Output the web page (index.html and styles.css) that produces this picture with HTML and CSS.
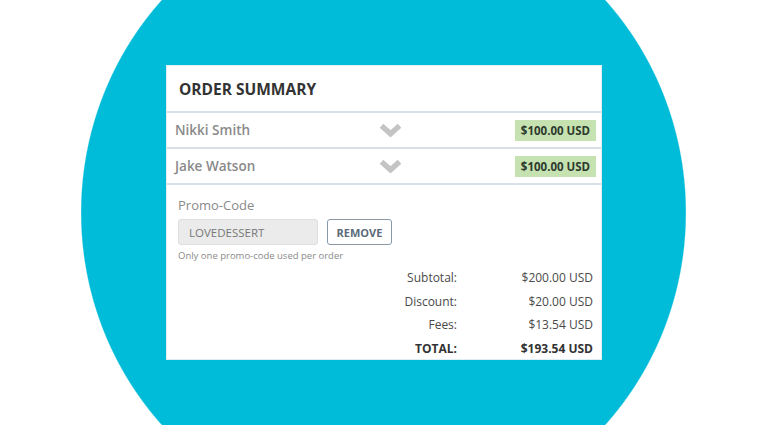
FILE: index.html
```html
<!DOCTYPE html>
<html lang="en">
<head>
<meta charset="utf-8">
<title>Order Summary</title>
<link rel="stylesheet" href="styles.css">
</head>
<body>
<div class="stage">
  <div class="card">
    <div class="card-header">ORDER SUMMARY</div>
    <div class="attendee">
      <span class="name">Nikki Smith</span>
      <svg class="chevron" viewBox="0 0 23 14" width="23" height="14" aria-hidden="true"><polyline points="2.5,2.8 11.5,10.8 20.5,2.8" fill="none" stroke="#c4c4c4" stroke-width="5.5"/></svg>
      <span class="price">$100.00 USD</span>
    </div>
    <div class="attendee">
      <span class="name">Jake Watson</span>
      <svg class="chevron" viewBox="0 0 23 14" width="23" height="14" aria-hidden="true"><polyline points="2.5,2.8 11.5,10.8 20.5,2.8" fill="none" stroke="#c4c4c4" stroke-width="5.5"/></svg>
      <span class="price">$100.00 USD</span>
    </div>
    <div class="promo">
      <div class="promo-label">Promo-Code</div>
      <div class="promo-row">
        <div class="promo-input">LOVEDESSERT</div>
        <button class="remove-btn" type="button">REMOVE</button>
      </div>
      <div class="promo-help">Only one promo-code used per order</div>
      <div class="totals">
        <span class="t-label">Subtotal:</span><span class="t-value">$200.00 USD</span>
        <span class="t-label">Discount:</span><span class="t-value">$20.00 USD</span>
        <span class="t-label">Fees:</span><span class="t-value">$13.54 USD</span>
        <span class="t-label total">TOTAL:</span><span class="t-value total">$193.54 USD</span>
      </div>
    </div>
  </div>
</div>
</body>
</html>
```
FILE: styles.css
```css
html, body {
  margin: 0;
  padding: 0;
}
body {
  width: 768px;
  height: 425px;
  overflow: hidden;
  font-family: "Open Sans", "Liberation Sans", sans-serif;
  background: #ffffff radial-gradient(ellipse 303px 313px at 383.5px 212.5px, #00bcd9 99.6%, #ffffff 100%) no-repeat;
}
.stage {
  padding-top: 66px;
}
.card {
  width: 434px;
  height: 293px;
  margin: 0 auto;
  background: #ffffff;
  box-sizing: border-box;
  box-shadow: 0 0 0 1px #dfeef2;
}
.card-header {
  height: 45px;
  display: flex;
  align-items: center;
  padding-left: 12px;
  font-size: 15.5px;
  font-weight: 700;
  color: #333333;
  border-bottom: 2px solid #d9e1e7;
}
.attendee {
  height: 34px;
  display: flex;
  align-items: center;
  padding: 0 5px 0 8px;
  border-bottom: 2px solid #d9e1e7;
}
.name {
  width: 204px;
  font-size: 13.5px;
  font-weight: 600;
  color: #8a8a8a;
}
.chevron {
  display: block;
  margin-top: -1px;
}
.price {
  margin-left: auto;
  width: 81px;
  height: 21px;
  display: flex;
  align-items: center;
  justify-content: center;
  background: #c5e2b0;
  font-size: 11.5px;
  font-weight: 700;
  color: #2e3a2e;
}
.promo {
  padding: 11px 8px 0 11px;
}
.promo-label {
  font-size: 13px;
  line-height: 18px;
  color: #8a8a8a;
}
.promo-row {
  display: flex;
  gap: 9px;
  margin-top: 5px;
}
.promo-input {
  width: 140px;
  height: 26px;
  box-sizing: border-box;
  border: 1px solid #dedede;
  border-radius: 3px;
  background: #ebebeb;
  padding-left: 10px;
  display: flex;
  align-items: center;
  font-size: 11.5px;
  color: #777777;
}
.remove-btn {
  width: 65px;
  height: 26px;
  box-sizing: border-box;
  border: 1px solid #8899a8;
  border-radius: 3px;
  background: #ffffff;
  padding: 0;
  font-family: "Open Sans", "Liberation Sans", sans-serif;
  font-size: 11px;
  font-weight: 700;
  color: #5b6b7b;
}
.promo-help {
  margin-top: 5px;
  font-size: 9.5px;
  line-height: 12px;
  color: #8a8a8a;
}
.totals {
  margin-top: 4px;
  display: grid;
  grid-template-columns: 1fr 136px;
  line-height: 23.5px;
  font-size: 12px;
  color: #4a4a4a;
}
.t-label, .t-value {
  text-align: right;
}
.total {
  font-weight: 700;
  color: #333333;
}
```
